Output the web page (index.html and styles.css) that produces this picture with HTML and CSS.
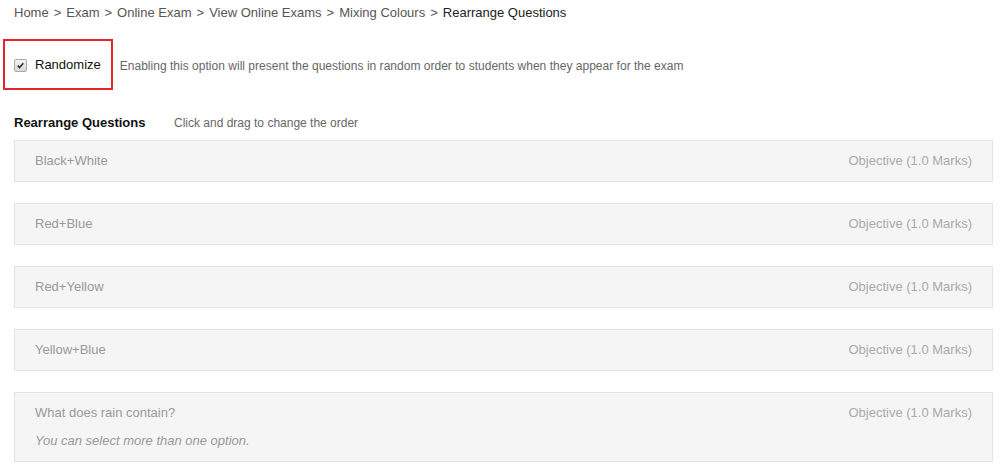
FILE: index.html
```html
<!DOCTYPE html>
<html>
<head>
<meta charset="utf-8">
<link rel="stylesheet" href="styles.css">
</head>
<body>
<nav class="crumbs">
  <a>Home</a><span class="sep">&gt;</span><a>Exam</a><span class="sep">&gt;</span><a>Online Exam</a><span class="sep">&gt;</span><a>View Online Exams</a><span class="sep">&gt;</span><a>Mixing Colours</a><span class="sep">&gt;</span><span class="current">Rearrange Questions</span>
</nav>

<div class="option-row">
  <label class="randomize">
    <span class="checkbox"><svg viewBox="0 0 13 13" width="13" height="13"><path d="M3.2 6.6 L5.4 8.9 L9.8 3.9" fill="none" stroke="#333" stroke-width="2"/></svg></span>
    <span class="label-text">Randomize</span>
  </label>
  <span class="option-desc">Enabling this option will present the questions in random order to students when they appear for the exam</span>
</div>

<div class="section-head">
  <span class="section-title">Rearrange Questions</span>
  <span class="section-hint">Click and drag to change the order</span>
</div>

<ul class="questions">
  <li class="question"><div class="q-main"><span class="q-title">Black+White</span></div><span class="q-type">Objective (1.0 Marks)</span></li>
  <li class="question"><div class="q-main"><span class="q-title">Red+Blue</span></div><span class="q-type">Objective (1.0 Marks)</span></li>
  <li class="question"><div class="q-main"><span class="q-title">Red+Yellow</span></div><span class="q-type">Objective (1.0 Marks)</span></li>
  <li class="question"><div class="q-main"><span class="q-title">Yellow+Blue</span></div><span class="q-type">Objective (1.0 Marks)</span></li>
  <li class="question"><div class="q-main"><span class="q-title">What does rain contain?</span><span class="q-note">You can select more than one option.</span></div><span class="q-type">Objective (1.0 Marks)</span></li>
</ul>
</body>
</html>
```

FILE: styles.css
```css
html, body {
  margin: 0;
  padding: 0;
  background: #fff;
}
body {
  font-family: "Liberation Sans", Arial, sans-serif;
  padding: 0 15px 0 14px;
  color: #333;
}
.crumbs {
  font-size: 13px;
  line-height: 18px;
  padding-top: 4px;
  color: #555;
}
.crumbs a { color: #555; }
.crumbs .sep { margin: 0 5px; color: #555; }
.crumbs .current { color: #222; }

.option-row {
  display: flex;
  align-items: center;
  margin-top: 17px;
  margin-left: -11px;
}
.randomize {
  display: flex;
  align-items: center;
  border: 2px solid #e5252c;
  height: 47px;
  padding: 0 9px 0 9px;
  box-sizing: content-box;
}
.checkbox {
  width: 11px;
  height: 11px;
  border: 1px solid #a9a9a9;
  border-radius: 2px;
  background: linear-gradient(#f2f2f2, #d8d8d8);
  display: inline-flex;
  align-items: center;
  justify-content: center;
  margin-top: 1px;
}
.checkbox svg { width: 11px; height: 11px; }
.label-text {
  font-size: 13px;
  color: #111;
  margin-left: 8px;
  padding-right: 1px;
}
.option-desc {
  font-size: 12px;
  color: #666;
  margin-left: 7px;
  margin-top: 3px;
  letter-spacing: 0.02px;
}

.section-head {
  display: flex;
  align-items: baseline;
  margin-top: 24px;
  line-height: 18px;
}
.section-title {
  font-size: 13px;
  font-weight: bold;
  color: #111;
  width: 160px;
}
.section-hint {
  font-size: 12px;
  color: #666;
}

.questions {
  list-style: none;
  margin: 8px 0 0 0;
  padding: 0;
  display: flex;
  flex-direction: column;
  gap: 21px;
}
.question {
  display: flex;
  justify-content: space-between;
  align-items: flex-start;
  background: #f5f5f5;
  border: 1px solid #e3e3e3;
  padding: 11px 20px 11px 20px;
  font-size: 13px;
  line-height: 18px;
  color: #999;
}
.q-main {
  display: flex;
  flex-direction: column;
  gap: 10px;
}
.q-title { color: #999; }
.q-note { font-style: italic; color: #999; }
.q-type { color: #aaa; }
```
